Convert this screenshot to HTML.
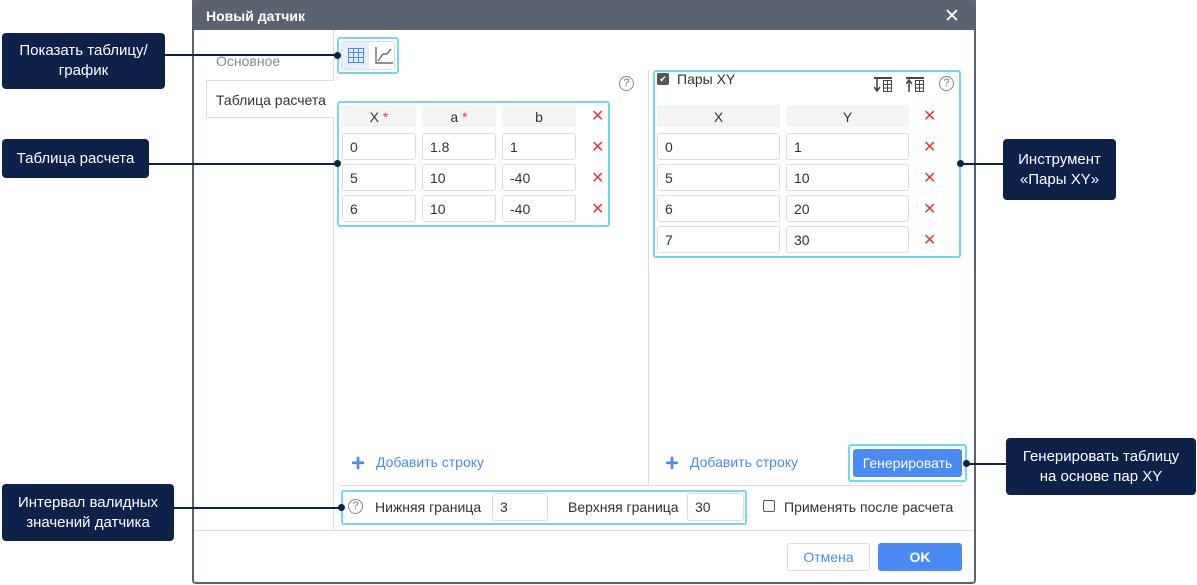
<!DOCTYPE html>
<html><head><meta charset="utf-8"><style>
*{box-sizing:border-box;margin:0;padding:0}
body{width:1197px;height:585px;background:#fff;position:relative;overflow:hidden;font-family:"Liberation Sans","Noto Sans CJK SC",sans-serif;font-size:14px;color:#333}
.a{position:absolute}
.dlg{left:192px;top:0;width:784px;height:584px;border:2px solid #5b6370;border-top:none;border-radius:0 0 4px 4px;background:#fff}
.hdr{left:192px;top:0;width:784px;height:30px;background:#5b6370;color:#fff;font-weight:bold;font-size:14px;padding:8px 0 0 14px;border-radius:4px 4px 0 0}
.cy{border:2px solid #6fdbea;border-radius:3px}
.th{background:#f4f4f4;height:22px;text-align:center;line-height:24px;font-size:14px;color:#333}
.in{border:1px solid #ddd;border-radius:3px;height:27px;line-height:26px;padding-left:7px;font-size:14px;color:#333;background:#fff}
.x{color:#e53935;font-size:16px;line-height:17px}
.note{background:#0c2248;color:#fff;border-radius:4px;font-size:15px;text-align:center;display:flex;align-items:center;justify-content:center;line-height:20px}
.ln{height:2px;background:#0c2248}
.dot{width:7px;height:7px;border-radius:50%;background:#0c2248}
.r{color:#e53935}
.blue{color:#4a8af4}
.hlp{width:15px;height:15px;border:1px solid #888;border-radius:50%;font-size:11px;text-align:center;line-height:13px;color:#777}
</style></head><body>
<div class="a dlg"></div>
<div class="a hdr">Новый датчик</div>
<div class="a" style="left:944px;top:5px;color:#fff;font-size:19px">✕</div>
<div class="a" style="left:333px;top:30px;width:1px;height:500px;background:#ddd"></div>
<div class="a" style="left:216px;top:53px;color:#888">Основное</div>
<div class="a" style="left:206px;top:80px;width:128px;height:38px;border:1px solid #ddd;border-right:none;background:#fff;padding:11px 0 0 9px">Таблица расчета</div>
<div class="a cy" style="left:337px;top:37px;width:62px;height:37px"></div>
<div class="a" style="left:341px;top:41px;width:54px;height:29px;border:1px solid #ddd;border-radius:3px"></div>
<div class="a" style="left:342px;top:42px;width:27px;height:27px;background:#e6effd"></div>
<svg class="a" style="left:348px;top:48px" width="16" height="15"><rect x="0.5" y="0.5" width="15" height="14" fill="none" stroke="#4a8af4"/><path d="M0 4.5H16M0 9.5H16M5.5 0V15M10.5 0V15" stroke="#4a8af4"/></svg>
<svg class="a" style="left:375px;top:47px" width="18" height="17"><path d="M1 0V16H18" stroke="#555" fill="none" stroke-width="1.2"/><path d="M3 14L8 7H12L16 2" stroke="#555" fill="none" stroke-width="1.2"/></svg>
<div class="a hlp" style="left:619px;top:76px">?</div>
<div class="a cy" style="left:337px;top:101px;width:273px;height:126px"></div>
<div class="a th" style="left:342px;top:105px;width:74px">X <span class="r">*</span></div>
<div class="a th" style="left:422px;top:105px;width:74px">a <span class="r">*</span></div>
<div class="a th" style="left:502px;top:105px;width:74px">b</div>
<div class="a x" style="left:591px;top:108px">✕</div>
<div class="a in" style="left:342px;top:133px;width:74px">0</div><div class="a in" style="left:422px;top:133px;width:74px">1.8</div><div class="a in" style="left:502px;top:133px;width:74px">1</div><div class="a x" style="left:591px;top:139px">✕</div>
<div class="a in" style="left:342px;top:164px;width:74px">5</div><div class="a in" style="left:422px;top:164px;width:74px">10</div><div class="a in" style="left:502px;top:164px;width:74px">-40</div><div class="a x" style="left:591px;top:170px">✕</div>
<div class="a in" style="left:342px;top:195px;width:74px">6</div><div class="a in" style="left:422px;top:195px;width:74px">10</div><div class="a in" style="left:502px;top:195px;width:74px">-40</div><div class="a x" style="left:591px;top:201px">✕</div>
<div class="a" style="left:648px;top:70px;width:1px;height:416px;background:#ddd"></div>
<div class="a cy" style="left:653px;top:70px;width:308px;height:188px"></div>
<div class="a" style="left:657px;top:73px;width:12px;height:12px;background:#555;border-radius:2px;color:#fff;font-size:9px;text-align:center;line-height:12px">✔</div>
<div class="a" style="left:677px;top:71px">Пары XY</div>
<svg class="a" style="left:874px;top:77px" width="18" height="15"><path d="M0 1H18" stroke="#444" stroke-width="2"/><path d="M3 2V13M0 10L3 14L6 10" stroke="#444" stroke-width="1.5" fill="none"/><rect x="9.5" y="3.5" width="8" height="11" fill="none" stroke="#444"/><path d="M9 7.5H18M9 11H18M13.5 3V15" stroke="#444"/></svg>
<svg class="a" style="left:906px;top:77px" width="18" height="15"><path d="M0 1H18" stroke="#444" stroke-width="2"/><path d="M3 4V15M0 7L3 3L6 7" stroke="#444" stroke-width="1.5" fill="none"/><rect x="9.5" y="3.5" width="8" height="11" fill="none" stroke="#444"/><path d="M9 7.5H18M9 11H18M13.5 3V15" stroke="#444"/></svg>
<div class="a hlp" style="left:939px;top:76px">?</div>
<div class="a th" style="left:657px;top:105px;width:123px">X</div>
<div class="a th" style="left:786px;top:105px;width:123px">Y</div>
<div class="a x" style="left:923px;top:108px">✕</div>
<div class="a in" style="left:657px;top:133px;width:123px">0</div><div class="a in" style="left:786px;top:133px;width:123px">1</div><div class="a x" style="left:923px;top:139px">✕</div>
<div class="a in" style="left:657px;top:164px;width:123px">5</div><div class="a in" style="left:786px;top:164px;width:123px">10</div><div class="a x" style="left:923px;top:170px">✕</div>
<div class="a in" style="left:657px;top:195px;width:123px">6</div><div class="a in" style="left:786px;top:195px;width:123px">20</div><div class="a x" style="left:923px;top:201px">✕</div>
<div class="a in" style="left:657px;top:226px;width:123px">7</div><div class="a in" style="left:786px;top:226px;width:123px">30</div><div class="a x" style="left:923px;top:232px">✕</div>
<div class="a blue" style="left:351px;top:450px;font-size:24px;font-weight:bold">+</div>
<div class="a blue" style="left:376px;top:454px">Добавить строку</div>
<div class="a blue" style="left:665px;top:450px;font-size:24px;font-weight:bold">+</div>
<div class="a blue" style="left:690px;top:454px">Добавить строку</div>
<div class="a cy" style="left:848px;top:444px;width:119px;height:38px"></div>
<div class="a" style="left:853px;top:449px;width:109px;height:28px;background:#4a8af4;border-radius:3px;color:#fff;text-align:center;line-height:28px">Генерировать</div>
<div class="a" style="left:340px;top:485px;width:622px;height:1px;background:#ddd"></div>
<div class="a cy" style="left:341px;top:490px;width:406px;height:35px"></div>
<div class="a hlp" style="left:348px;top:499px">?</div>
<div class="a" style="left:375px;top:499px">Нижняя граница</div>
<div class="a in" style="left:492px;top:493px;width:56px;height:28px">3</div>
<div class="a" style="left:568px;top:499px">Верхняя граница</div>
<div class="a in" style="left:687px;top:493px;width:57px;height:28px">30</div>
<div class="a" style="left:763px;top:500px;width:12px;height:12px;border:1px solid #555;border-radius:2px"></div>
<div class="a" style="left:784px;top:499px">Применять после расчета</div>
<div class="a" style="left:194px;top:530px;width:780px;height:1px;background:#ddd"></div>
<div class="a" style="left:787px;top:543px;width:83px;height:28px;border:1px solid #ddd;border-radius:3px;color:#4a8af4;text-align:center;line-height:26px">Отмена</div>
<div class="a" style="left:878px;top:543px;width:84px;height:28px;background:#4a8af4;border-radius:3px;color:#fff;text-align:center;line-height:28px;font-weight:bold">OK</div>
<div class="a note" style="left:2px;top:33px;width:163px;height:56px">Показать таблицу/<br>график</div>
<div class="a ln" style="left:165px;top:54px;width:173px"></div><div class="a dot" style="left:334px;top:52px"></div>
<div class="a note" style="left:2px;top:139px;width:147px;height:39px">Таблица расчета</div>
<div class="a ln" style="left:149px;top:163px;width:189px"></div><div class="a dot" style="left:334px;top:160px"></div>
<div class="a note" style="left:1003px;top:139px;width:113px;height:61px">Инструмент<br>«Пары XY»</div>
<div class="a ln" style="left:960px;top:163px;width:43px"></div><div class="a dot" style="left:957px;top:160px"></div>
<div class="a note" style="left:1006px;top:438px;width:190px;height:57px">Генерировать таблицу<br>на основе пар XY</div>
<div class="a ln" style="left:966px;top:463px;width:40px"></div><div class="a dot" style="left:963px;top:460px"></div>
<div class="a note" style="left:2px;top:484px;width:172px;height:57px">Интервал валидных<br>значений датчика</div>
<div class="a ln" style="left:174px;top:507px;width:168px"></div><div class="a dot" style="left:338px;top:504px"></div>
</body></html>
